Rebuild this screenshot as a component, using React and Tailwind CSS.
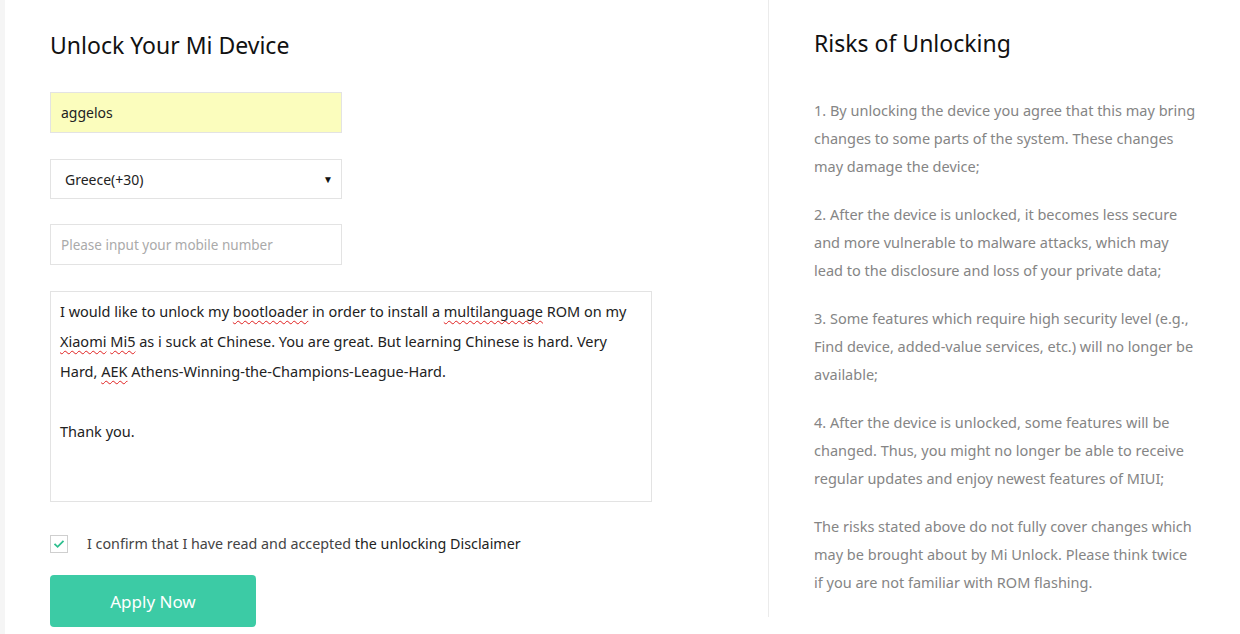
import { useState } from "react";

const font = { fontFamily: '"Noto Sans", "Open Sans", Arial, sans-serif' };

const inputCls =
  "block w-[292px] h-[41px] px-[10px] border border-[#e3e3e3] text-[14px] outline-none";

const risks = [
  "1. By unlocking the device you agree that this may bring changes to some parts of the system. These changes may damage the device;",
  "2. After the device is unlocked, it becomes less secure and more vulnerable to malware attacks, which may lead to the disclosure and loss of your private data;",
  "3. Some features which require high security level (e.g., Find device, added-value services, etc.) will no longer be available;",
  "4. After the device is unlocked, some features will be changed. Thus, you might no longer be able to receive regular updates and enjoy newest features of MIUI;",
  "The risks stated above do not fully cover changes which may be brought about by Mi Unlock. Please think twice if you are not familiar with ROM flashing.",
];

function Squiggle({ children }) {
  return (
    <span className="underline decoration-wavy decoration-[#e02020] decoration-1 underline-offset-[3px]">
      {children}
    </span>
  );
}

export default function App() {
  const [checked, setChecked] = useState(true);

  return (
    <div className="w-[1240px] h-[634px] bg-white flex overflow-hidden" style={font}>
      <div className="w-[5px] bg-[#f5f5f5] shrink-0" />

      {/* left: form */}
      <div className="w-[764px] shrink-0 pl-[45px] pt-[28px] border-r border-[#ebebeb] mb-[17px]">
        <h1 className="text-[23px] leading-[34px] text-[#111] font-normal">Unlock Your Mi Device</h1>

        <input
          className={`${inputCls} mt-[30px] bg-[#fbfdbd] text-[#222]`}
          defaultValue="aggelos"
        />

        <div className="relative mt-[26px] w-[292px] h-[40px] border border-[#e3e3e3] flex items-center pl-[14px] text-[14px] text-[#222]">
          Greece(+30)
          <span className="absolute right-[8px] top-[12px] text-[10px] text-[#111]">▼</span>
        </div>

        <input
          className={`${inputCls} mt-[25px] text-[#222] placeholder:text-[#aaa] placeholder:text-[13.5px]`}
          placeholder="Please input your mobile number"
        />

        <div className="mt-[26px] w-[602px] h-[211px] border border-[#e3e3e3] px-[9px] pt-[4px] text-[14.5px] leading-[30px] text-[#222]">
          <p>
            I would like to unlock my <Squiggle>bootloader</Squiggle> in order to install a{" "}
            <Squiggle>multilanguage</Squiggle> ROM on my <Squiggle>Xiaomi</Squiggle>{" "}
            <Squiggle>Mi5</Squiggle> as i suck at Chinese. You are great. But learning Chinese is hard. Very
            Hard, <Squiggle>AEK</Squiggle> Athens-Winning-the-Champions-League-Hard.
          </p>
          <p className="mt-[30px]">Thank you.</p>
        </div>

        <label className="mt-[31px] flex items-center gap-[19px] text-[14.3px] text-[#444] cursor-pointer">
          <span
            onClick={() => setChecked(!checked)}
            className="w-[18px] h-[18px] border border-[#cfcfcf] flex items-center justify-center"
          >
            {checked && (
              <svg width="12" height="10" viewBox="0 0 12 10" fill="none">
                <path d="M1.5 4.8 L4.6 7.8 L10.5 1.8" stroke="#2fbf8f" strokeWidth="1.8" />
              </svg>
            )}
          </span>
          <span>
            I confirm that I have read and accepted <span className="text-[#222]">the unlocking Disclaimer</span>
          </span>
        </label>

        <button className="mt-[21px] w-[206px] h-[52px] rounded-[4px] bg-[#3ccba5] text-white text-[17px]">
          Apply Now
        </button>
      </div>

      {/* right: risks */}
      <div className="pl-[45px] pt-[26px] w-[430px]">
        <h2 className="text-[23px] leading-[34px] text-[#111] font-normal">Risks of Unlocking</h2>
        <div className="mt-[36px] flex flex-col gap-[20px]">
          {risks.map((r) => (
            <p key={r} className="text-[14.5px] leading-[28px] text-[#858585] w-[382px]">
              {r}
            </p>
          ))}
        </div>
      </div>
    </div>
  );
}
